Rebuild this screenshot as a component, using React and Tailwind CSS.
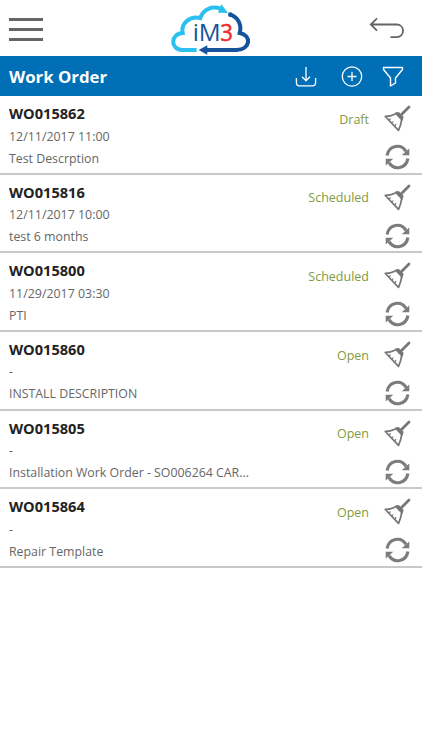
const WORK_ORDERS = [
  { id: "WO015862", date: "12/11/2017 11:00", description: "Test Descrption", status: "Draft" },
  { id: "WO015816", date: "12/11/2017 10:00", description: "test 6 months", status: "Scheduled" },
  { id: "WO015800", date: "11/29/2017 03:30", description: "PTI", status: "Scheduled" },
  { id: "WO015860", date: "-", description: "INSTALL DESCRIPTION", status: "Open" },
  { id: "WO015805", date: "-", description: "Installation Work Order - SO006264 CAR...", status: "Open" },
  { id: "WO015864", date: "-", description: "Repair Template", status: "Open" },
];

function Logo() {
  return (
    <svg viewBox="0 0 300 168" className="h-14 w-[100px]" fill="none">
      <path
        d="M110 150H66C30 148 31 101 68 99C62 70 90 46 121 54C130 27 157 17 181 26"
        stroke="#2cc0f0"
        strokeWidth="12"
      />
      <path d="M184 13L204 39L174 38Z" fill="#2cc0f0" />
      <path
        d="M211 44C235 52 246 75 239 99C276 105 272 149 230 150H130"
        stroke="#15539c"
        strokeWidth="12"
      />
      <circle cx="211" cy="44" r="7" fill="#15539c" />
      <path d="M116 150L142 136V164Z" fill="#15539c" />
      <text
        x="98"
        y="123"
        fontSize="70"
        fontFamily="Open Sans, sans-serif"
        fontWeight="400"
        fill="#17549b"
        textLength="84"
        lengthAdjust="spacingAndGlyphs"
      >
        iM
      </text>
      <text
        x="181"
        y="123"
        fontSize="70"
        fontFamily="Open Sans, sans-serif"
        fill="#f02a30"
        stroke="#f02a30"
        strokeWidth="1.5"
        textLength="38"
        lengthAdjust="spacingAndGlyphs"
      >
        3
      </text>
    </svg>
  );
}

function BackIcon() {
  return (
    <svg viewBox="0 0 36 24" className="h-6 w-9" fill="none" stroke="#656565" strokeWidth="1.8">
      <path d="M8 2.3L1.8 8.5L8 14.7M2 8.5H27.5C36.2 8.5 36.2 21.2 27.5 21.2H21.5" />
    </svg>
  );
}

function DownloadIcon() {
  return (
    <svg viewBox="0 0 22 22" className="size-[22px]" fill="none" stroke="white" strokeWidth="1.3">
      <path d="M11 1V14.5M7 10.8L11 14.8L15 10.8M1.4 12V16.5Q1.4 19.8 4.5 19.8H17.5Q20.6 19.8 20.6 16.5V12" />
    </svg>
  );
}

function AddIcon() {
  return (
    <svg viewBox="0 0 22 22" className="size-[22px]" fill="none" stroke="white" strokeWidth="1.3">
      <circle cx="11" cy="10.5" r="9.7" />
      <path d="M11 6V15M6.5 10.5H15.5" />
    </svg>
  );
}

function FilterIcon() {
  return (
    <svg
      viewBox="0 0 22 22"
      className="size-[22px]"
      fill="none"
      stroke="white"
      strokeWidth="1.4"
      strokeLinejoin="round"
    >
      <path d="M1.5 1.5H20.5V3.5L13.5 12V17L8.5 20V12L1.5 3.5Z" />
    </svg>
  );
}

function BroomIcon() {
  return (
    <svg viewBox="0 0 28 28" className="size-7" fill="none" stroke="#777">
      <path d="M18.5 10.5L26 3" strokeWidth="2.8" strokeLinecap="round" />
      <path d="M12.5 9.3L15.5 8.8L19.8 13L19 16Z" fill="#777" strokeWidth="1.5" strokeLinejoin="round" />
      <path d="M12.5 10Q7 12.6 2.3 12.5L15.5 26.3Q18 21 18.7 15.5" strokeWidth="1.8" strokeLinejoin="round" />
      <path d="M6 16L7.5 14.5M9 19L10.2 17.5M12 22L13 20" strokeWidth="1.2" />
    </svg>
  );
}

function SyncIcon() {
  return (
    <svg viewBox="0 0 26 26" className="size-[26px]" fill="none">
      <path
        d="M3.1 11.5C4.8 1.2 17 -0.8 22 7.3M23.9 14.5C22.2 24.8 10 26.8 5 18.7"
        stroke="#7c7c7c"
        strokeWidth="3.2"
      />
      <path d="M25.3 4.5V11.3H17.7ZM1.7 21.5V14.7H9.3Z" fill="#7c7c7c" />
    </svg>
  );
}

function WorkOrderRow({ order }) {
  return (
    <li className="flex h-[78.65px] justify-between border-b-2 border-[#c8c8c8] pl-[9px] pr-[11px]">
      <div className="pt-[6px]">
        <h2 className="text-[14.6px] leading-[22px] font-bold text-[#222]">{order.id}</h2>
        <p className="pt-[1.5px] text-[12.4px] leading-[22px] text-[#666]">{order.date}</p>
        <p className="text-[12.35px] leading-[21px] text-[#666]">{order.description}</p>
      </div>
      <div className="flex">
        <span className="mr-[14px] pt-[12.7px] text-[12.5px] leading-[22px] text-[#829b40]">{order.status}</span>
        <div className="flex flex-col items-center gap-[12px] pt-[8px]">
          <BroomIcon />
          <SyncIcon />
        </div>
      </div>
    </li>
  );
}

export default function App() {
  return (
    <div className="min-h-screen bg-white font-['Open_Sans','Noto_Sans',sans-serif]">
      <header className="grid h-14 grid-cols-3 items-center pl-[9px] pr-[17px]">
        <button aria-label="Menu" className="flex w-[34px] flex-col gap-[7px] pt-[3px]">
          <span className="h-[3px] w-full bg-[#666]" />
          <span className="h-[3px] w-full bg-[#666]" />
          <span className="h-[3px] w-full bg-[#666]" />
        </button>
        <div className="ml-[19px]">
          <Logo />
        </div>
        <button aria-label="Back" className="justify-self-end">
          <BackIcon />
        </button>
      </header>
      <div className="flex h-10 items-center justify-between bg-[#006fb5] pl-[9px] pr-[18px] text-white">
        <h1 className="pt-px text-[16.8px] font-bold">Work Order</h1>
        <div className="flex items-center pt-px">
          <DownloadIcon />
          <span className="ml-6 flex">
            <AddIcon />
          </span>
          <span className="ml-[19px] flex">
            <FilterIcon />
          </span>
        </div>
      </div>
      <ul>
        {WORK_ORDERS.map((order) => (
          <WorkOrderRow key={order.id} order={order} />
        ))}
      </ul>
    </div>
  );
}
